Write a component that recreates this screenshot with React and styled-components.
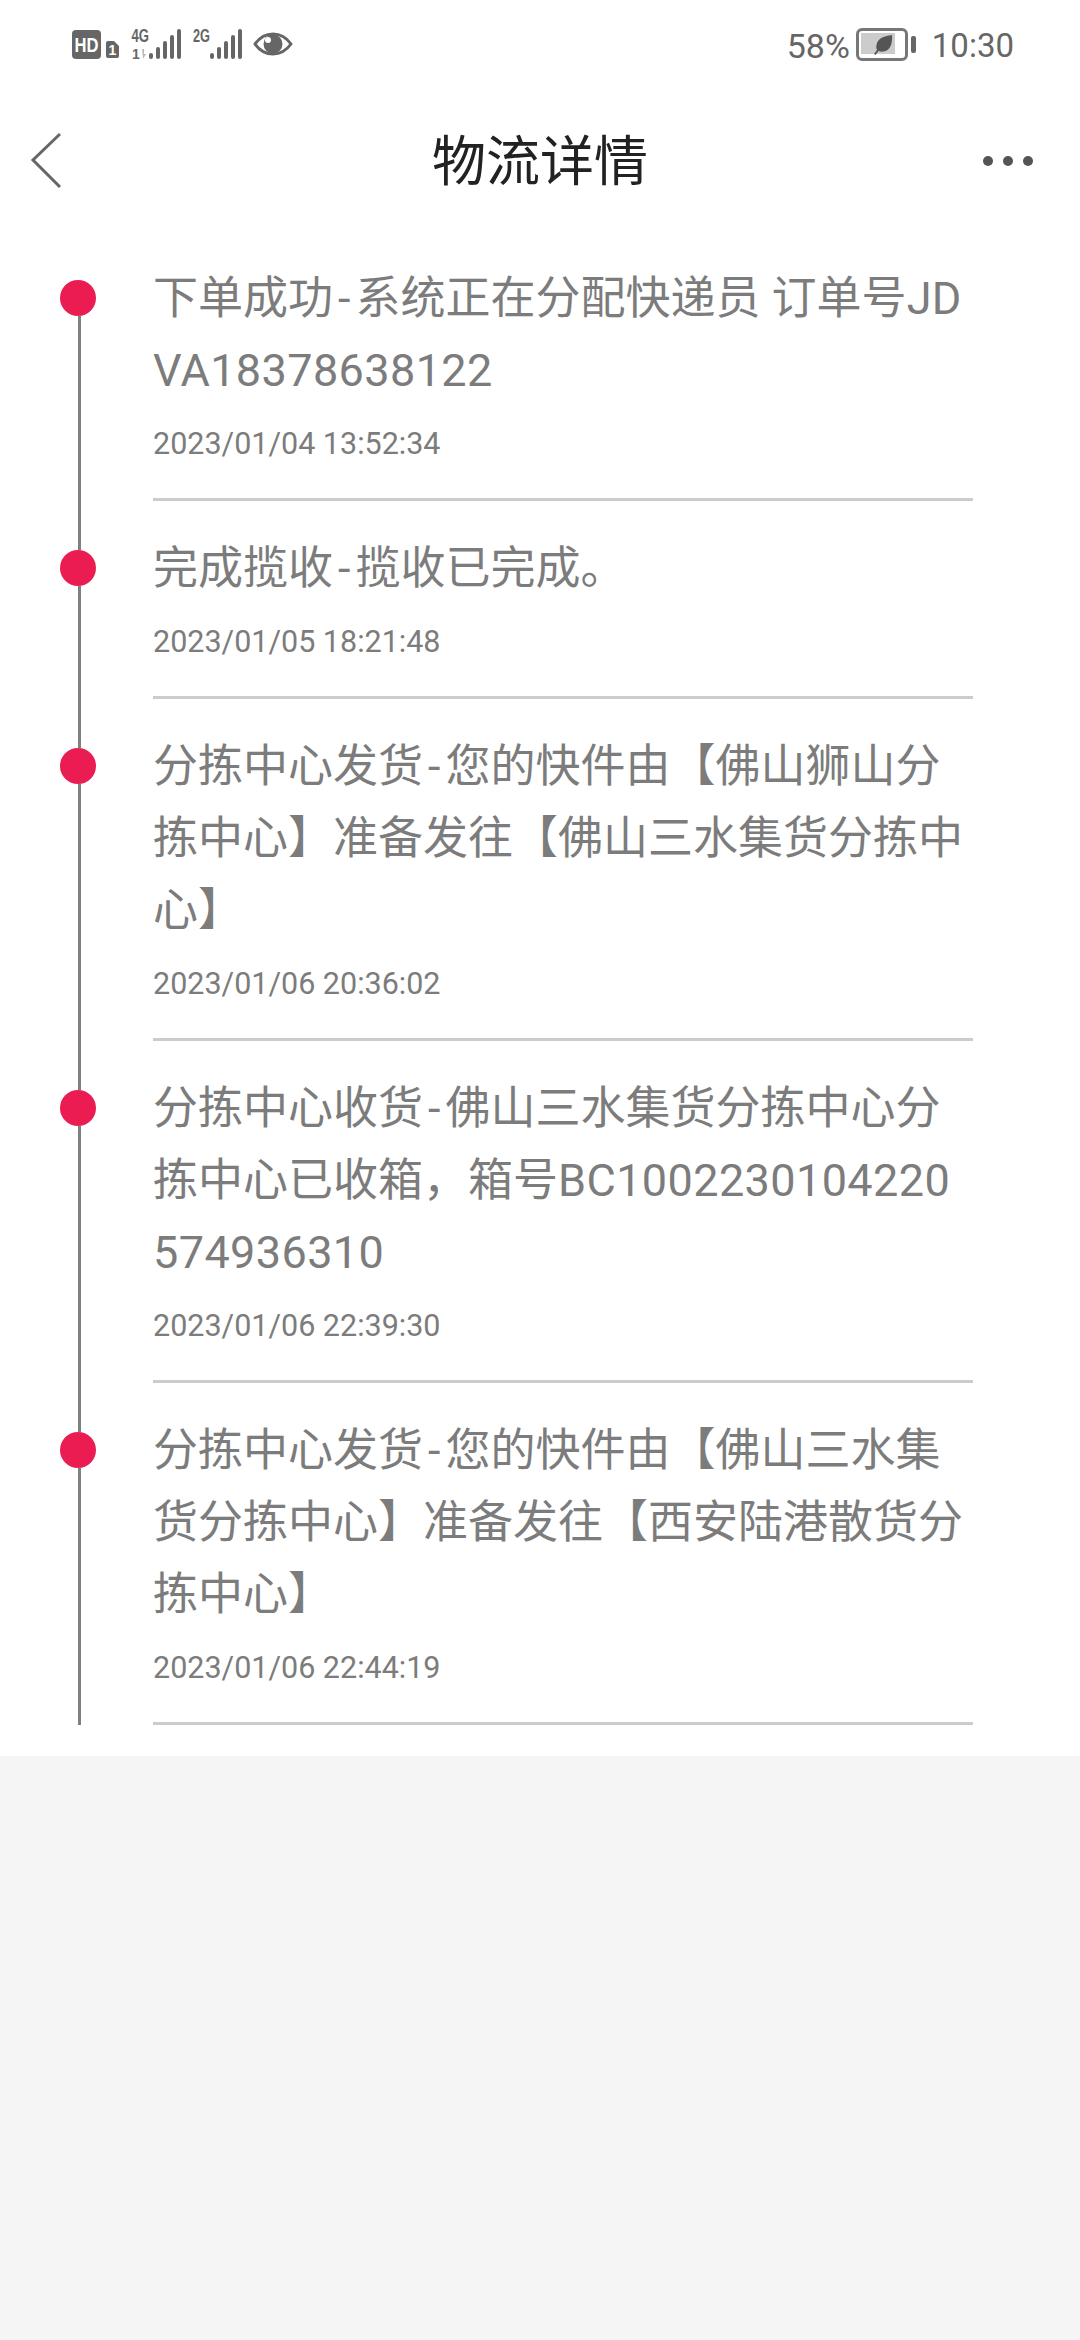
import React from "react";
import styled, { createGlobalStyle } from "styled-components";

const GlobalStyle = createGlobalStyle`
  html, body {
    margin: 0;
    padding: 0;
    background: #f5f5f5;
  }
  * {
    box-sizing: border-box;
  }
`;

const FONT = `Roboto, "Noto Sans CJK SC", sans-serif`;

const Page = styled.div`
  width: 1080px;
  min-height: 2340px;
  background: #f5f5f5;
  font-family: ${FONT};
`;

const Sheet = styled.div`
  background: #ffffff;
  height: 1756px;
`;

// Status bar
const StatusBar = styled.div`
  height: 90px;
  padding: 0 66px 0 72px;
  display: flex;
  align-items: center;
  justify-content: space-between;
  color: #666666;
`;

const StatusGroup = styled.div`
  display: flex;
  align-items: center;
`;

const StatusText = styled.span`
  font-size: ${(p) => p.$size}px;
  line-height: 40px;
  margin-top: 2px;
  margin-left: ${(p) => p.$gap || 0}px;
  color: #666666;
`;

const BatterySvg = styled.svg`
  display: block;
  margin-left: 6px;
`;

const IconText = styled.text`
  font-family: "Liberation Sans", sans-serif;
  font-weight: 700;
  fill: ${(p) => p.$fill || "#666666"};
`;

const Bars = ({ x }) =>
  [6, 12, 18, 24, 30].map((h, i) => (
    <rect key={h} x={x + i * 7} y={59 - h} width="4" height={h} rx="2" fill="#666" />
  ));

const LeftIcons = () => (
  <svg width="224" height="40" viewBox="72 25 224 40">
    <rect x="72" y="30" width="29" height="29" rx="4" fill="#666" />
    <IconText x="74.500" y="52" fontSize="21" $fill="#fff" textLength="24" lengthAdjust="spacingAndGlyphs">HD</IconText>
    <path d="M106 43a2 2 0 0 1 2-2h6l5 5v10a2 2 0 0 1-2 2h-9a2 2 0 0 1-2-2z" fill="#666" />
    <IconText x="112.500" y="55" textAnchor="middle" fontSize="14" $fill="#fff">1</IconText>
    <IconText x="131.500" y="42" fontSize="18" textLength="17.500" lengthAdjust="spacingAndGlyphs">4G</IconText>
    <IconText x="132" y="59" fontSize="14">1</IconText>
    <path d="M142 49h2v5h2l-3 5z" fill="#bbb" />
    <Bars x={149} />
    <IconText x="193" y="42" fontSize="18" textLength="17" lengthAdjust="spacingAndGlyphs">2G</IconText>
    <Bars x={210} />
    <path d="M255 44c5-7 11-10 18-10s13 3 18 10c-5 7-11 10-18 10s-13-3-18-10z" fill="none" stroke="#666" strokeWidth="3" />
    <circle cx="273" cy="44" r="9.500" fill="#666" />
    <circle cx="268" cy="40" r="3" fill="#fff" />
  </svg>
);

const Battery = () => (
  <BatterySvg width="61" height="34" viewBox="856 28 61 34">
    <rect x="857.500" y="29.500" width="49" height="30" rx="4.500" fill="none" stroke="#777" strokeWidth="3" />
    <rect x="861" y="33" width="34" height="21" fill="#cccccc" />
    <rect x="911" y="36" width="5" height="17" rx="2" fill="#666" />
    <path d="M892 35c-8 1-13 3-15 8-1 3-1 5 0 7l-3 4 1.500 1 3-4c3 1 6 1 9-1 4-3 5-9 4.500-15z" fill="#555" />
  </BatterySvg>
);

// Nav header
const Header = styled.div`
  height: 141px;
  padding: 0 47px 0 30px;
  display: grid;
  grid-template-columns: 117px 1fr 100px;
  align-items: center;
`;

const BackIcon = styled.svg`
  display: block;
  width: 34px;
  height: 58px;
`;

const Title = styled.div`
  text-align: center;
  font-size: 54px;
  line-height: 70px;
  margin-top: 4px;
  color: #222222;
`;

const MoreDots = styled.div`
  display: flex;
  justify-content: flex-end;
  gap: 10px;
`;

const MoreDot = styled.span`
  width: 10px;
  height: 10px;
  border-radius: 50%;
  background: #555555;
`;

// Timeline
const Timeline = styled.div`
  display: flex;
  flex-direction: column;
`;

const Row = styled.div`
  display: flex;
  padding-left: 60px;
`;

const Rail = styled.div`
  width: 36px;
  flex: none;
  display: flex;
  flex-direction: column;
`;

const RailLine = styled.div`
  width: 3px;
  margin-left: 18px;
  background: ${(p) => (p.$hidden ? "transparent" : "#808080")};
  flex: ${(p) => (p.$top ? "0 0 49px" : "1")};
`;

const Dot = styled.div`
  width: 36px;
  height: 36px;
  flex: none;
  border-radius: 50%;
  background: #ea1c52;
`;

const Body = styled.div`
  width: 820px;
  margin-left: 57px;
  padding: 32px 0 34px;
  border-bottom: 3px solid #cccccc;
`;

const MessageLine = styled.div`
  font-size: 45px;
  line-height: 72px;
  color: #7c7c7c;
  white-space: pre;
`;

const Latin = styled.span`
  letter-spacing: 0.4px;
`;

const Dash = styled.span`
  margin: 0 5px;
`;

const Time = styled.div`
  margin-top: 17px;
  font-size: 30.500px;
  line-height: 40px;
  color: #7c7c7c;
`;

const EVENTS = [
  {
    lines: ["下单成功-系统正在分配快递员 订单号JD", "VA18378638122"],
    time: "2023/01/04 13:52:34",
  },
  { lines: ["完成揽收-揽收已完成。"], time: "2023/01/05 18:21:48" },
  {
    lines: ["分拣中心发货-您的快件由【佛山狮山分", "拣中心】准备发往【佛山三水集货分拣中", "心】"],
    time: "2023/01/06 20:36:02",
  },
  {
    lines: ["分拣中心收货-佛山三水集货分拣中心分", "拣中心已收箱，箱号BC1002230104220", "574936310"],
    time: "2023/01/06 22:39:30",
  },
  {
    lines: ["分拣中心发货-您的快件由【佛山三水集", "货分拣中心】准备发往【西安陆港散货分", "拣中心】"],
    time: "2023/01/06 22:44:19",
  },
];

// Latin runs and the dash are a touch wider than Roboto's defaults
const renderText = (text) =>
  text.split(/([A-Za-z0-9]+|-)/).map((part, i) => {
    if (part === "-") return <Dash key={i}>-</Dash>;
    if (/^[A-Za-z0-9]+$/.test(part)) return <Latin key={i}>{part}</Latin>;
    return part;
  });

const App = () => {
  return (
    <Page>
      <GlobalStyle />
      <Sheet>
        <StatusBar>
          <LeftIcons />
          <StatusGroup>
            <StatusText $size={34}>58%</StatusText>
            <Battery />
            <StatusText $size={33} $gap={15}>10:30</StatusText>
          </StatusGroup>
        </StatusBar>
        <Header>
          <BackIcon viewBox="0 0 34 58">
            <path d="M30 2 3 28l27 27" fill="none" stroke="#666" strokeWidth="3" />
          </BackIcon>
          <Title>物流详情</Title>
          <MoreDots>
            <MoreDot />
            <MoreDot />
            <MoreDot />
          </MoreDots>
        </Header>
        <Timeline>
          {EVENTS.map((event, i) => (
            <Row key={event.time}>
              <Rail>
                <RailLine $top $hidden={i === 0} />
                <Dot />
                <RailLine />
              </Rail>
              <Body>
                {event.lines.map((line) => (
                  <MessageLine key={line}>{renderText(line)}</MessageLine>
                ))}
                <Time>{event.time}</Time>
              </Body>
            </Row>
          ))}
        </Timeline>
      </Sheet>
    </Page>
  );
};

export default App;
